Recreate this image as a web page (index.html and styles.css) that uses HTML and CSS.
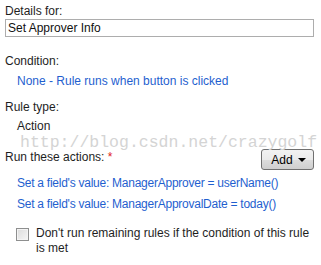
FILE: index.html
```html
<!DOCTYPE html>
<html lang="en">
<head>
  <meta charset="UTF-8" />
  <title>Rule Details</title>
  <link rel="stylesheet" href="styles.css">
</head>
<body>
  <div class="panel">
    <div class="label">Details for:</div>
    <div class="textbox">Set Approver Info</div>

    <div class="label cond">Condition:</div>
    <div class="link indent cond-value">None - Rule runs when button is clicked</div>

    <div class="label ruletype">Rule type:</div>
    <div class="plain indent">Action</div>

    <div class="actions-head">
      <div class="label">Run these actions: <span class="req">*</span></div>
      <button class="add-btn">Add <span class="caret"></span></button>
    </div>

    <div class="link indent action">Set a field's value: ManagerApprover = userName()</div>
    <div class="link indent action">Set a field's value: ManagerApprovalDate = today()</div>

    <label class="check-row">
      <span class="check"></span>
      <span class="check-text">Don't run remaining rules if the condition of this rule is met</span>
    </label>

    <div class="watermark">http://blog.csdn.net/crazygolf</div>
  </div>
</body>
</html>
```

FILE: styles.css
```css
body {
  margin: 0;
  background: #fff;
  font-family: "Liberation Sans", Arial, sans-serif;
  font-size: 12px;
  line-height: 15px;
  color: #1e1e1e;
}

.panel {
  position: relative;
  padding: 4px 7px 0 5px;
}

.label {
  color: #1e1e1e;
}

.textbox {
  height: 16px;
  border: 1px solid #adadad;
  padding-left: 2px;
  line-height: 16px;
  color: #111;
}

.cond {
  margin-top: 17px;
}

.indent {
  padding-left: 12px;
}

.link {
  color: #1f5fcf;
}

.cond-value {
  margin-top: 5px;
}

.ruletype {
  margin-top: 11px;
}

.plain {
  margin-top: 4px;
}

.actions-head {
  display: flex;
  justify-content: space-between;
  align-items: flex-end;
  margin-top: 15px;
}

.req {
  color: #e0201b;
}

.add-btn {
  width: 53px;
  height: 21px;
  margin-bottom: -5px;
  padding: 0 0 0 2px;
  border: 1px solid #707070;
  border-radius: 3px;
  background: linear-gradient(#f2f2f2, #ebebeb 50%, #dddddd 51%, #cfcfcf);
  font-family: "Liberation Sans", Arial, sans-serif;
  font-size: 12px;
  color: #000;
  display: flex;
  align-items: center;
  justify-content: center;
  gap: 5px;
}

.caret {
  width: 0;
  height: 0;
  border-left: 4px solid transparent;
  border-right: 4px solid transparent;
  border-top: 4px solid #000;
}

.action {
  margin-top: 11px;
  letter-spacing: -0.25px;
}

.action + .action {
  margin-top: 6px;
}

.check-row {
  display: flex;
  align-items: flex-start;
  gap: 7px;
  margin-top: 14px;
  padding-left: 11px;
}

.check {
  flex: none;
  width: 11px;
  height: 11px;
  margin-top: 2px;
  border: 1px solid #8e8f8f;
  background: linear-gradient(135deg, #dcdcdc, #f6f6f6);
  box-shadow: inset 0 0 0 1px #f4f4f4;
}

.check-text {
  color: #1e1e1e;
}

.watermark {
  position: absolute;
  left: 20px;
  top: 134px;
  font-family: "Liberation Mono", monospace;
  font-size: 16.5px;
  line-height: 17px;
  color: #d4d4d4;
  white-space: nowrap;
  pointer-events: none;
}
```
